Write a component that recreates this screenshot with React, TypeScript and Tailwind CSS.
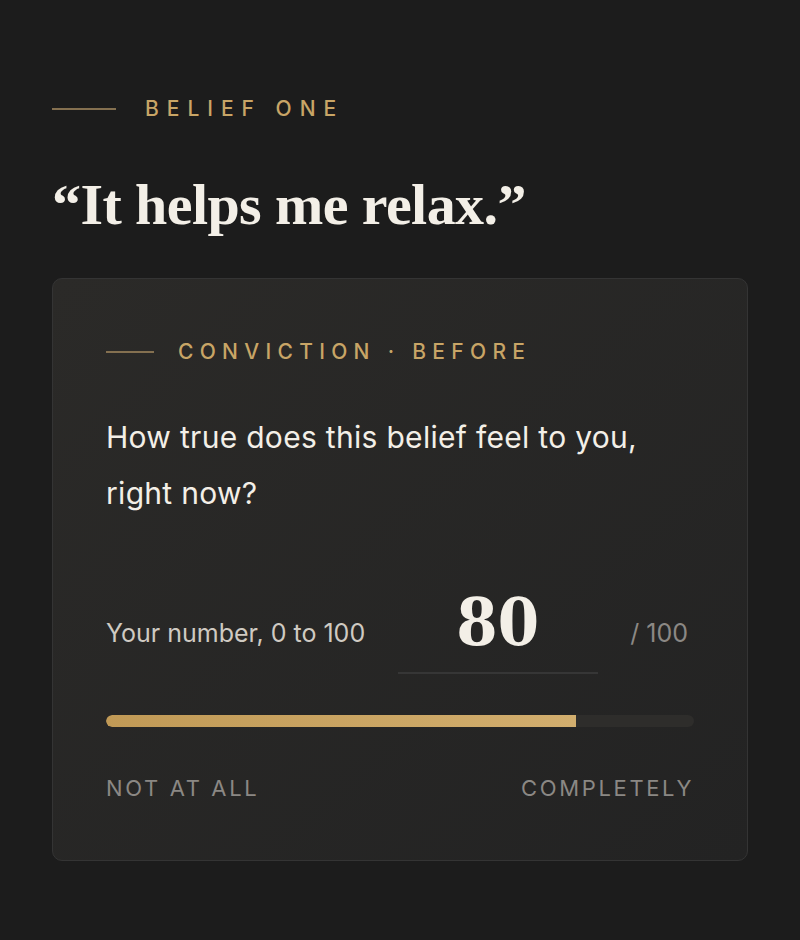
import React from "react";

const sans = "font-['Inter','Liberation_Sans',sans-serif]";
const serif = "font-['Liberation_Serif','DejaVu_Serif',serif]";
const digits = "font-['DejaVu_Serif_Condensed','DejaVu_Serif','Liberation_Serif',serif]";

function Eyebrow({ text, lineW, gap, tracking }: { text: string; lineW: string; gap: string; tracking: string }) {
  return (
    <div className={`flex items-center ${gap}`}>
      <span className={`h-[1.5px] ${lineW} bg-[#847050]`} />
      <span className={`${sans} text-[21px] font-medium uppercase ${tracking} text-[#c8a566]`}>{text}</span>
    </div>
  );
}

export default function App() {
  const value = 80;
  return (
    <div className="min-h-[940px] w-full bg-[#1c1c1c] px-[52px] pt-[93px] pb-[80px]">
      <Eyebrow text="Belief One" lineW="w-[64px]" gap="gap-[29px]" tracking="tracking-[0.38em]" />
      <h1 className={`${serif} mt-[48px] text-[58px] font-bold leading-[1.1] tracking-[-0.01em] text-[#f3efe7]`}>
        “It helps me relax.”
      </h1>

      <div className="mt-[42px] rounded-[10px] border border-[#343434] bg-gradient-to-br from-[#2b2a28] to-[#232323] px-[53px] pt-[57px] pb-[55px]">
        <Eyebrow text="Conviction · Before" lineW="w-[48px]" gap="gap-[24px]" tracking="tracking-[0.3em]" />
        <p className={`${sans} mt-[41px] text-[30px] leading-[56px] tracking-[0.01em] text-[#f3efe7]`}>
          How true does this belief feel to you, right now?
        </p>

        <div className="mt-[73px] flex items-center justify-between">
          <span className={`${sans} text-[25px] text-[#cfcac2]`}>Your number, 0 to 100</span>
          <div className="flex w-[200px] flex-col items-center">
            <span className={`${digits} text-[66px] font-bold leading-[56px] text-[#f3efe7]`}>{value}</span>
            <span className="mt-[22px] h-[2px] w-full bg-[#363636]" />
          </div>
          <span className={`${sans} pr-[6px] text-[25px] text-[#8b8884]`}>/ 100</span>
        </div>

        <div className="mt-[41px] h-[12px] w-full overflow-hidden rounded-full bg-[#2e2d2b]">
          <div
            className="h-full rounded-l-full bg-gradient-to-r from-[#c19a56] to-[#d2ae6e]"
            style={{ width: `${value}%` }}
          />
        </div>

        <div className={`${sans} mt-[45px] flex justify-between text-[22px] uppercase tracking-[0.12em] text-[#8b8884]`}>
          <span>Not at all</span>
          <span>Completely</span>
        </div>
      </div>
    </div>
  );
}
